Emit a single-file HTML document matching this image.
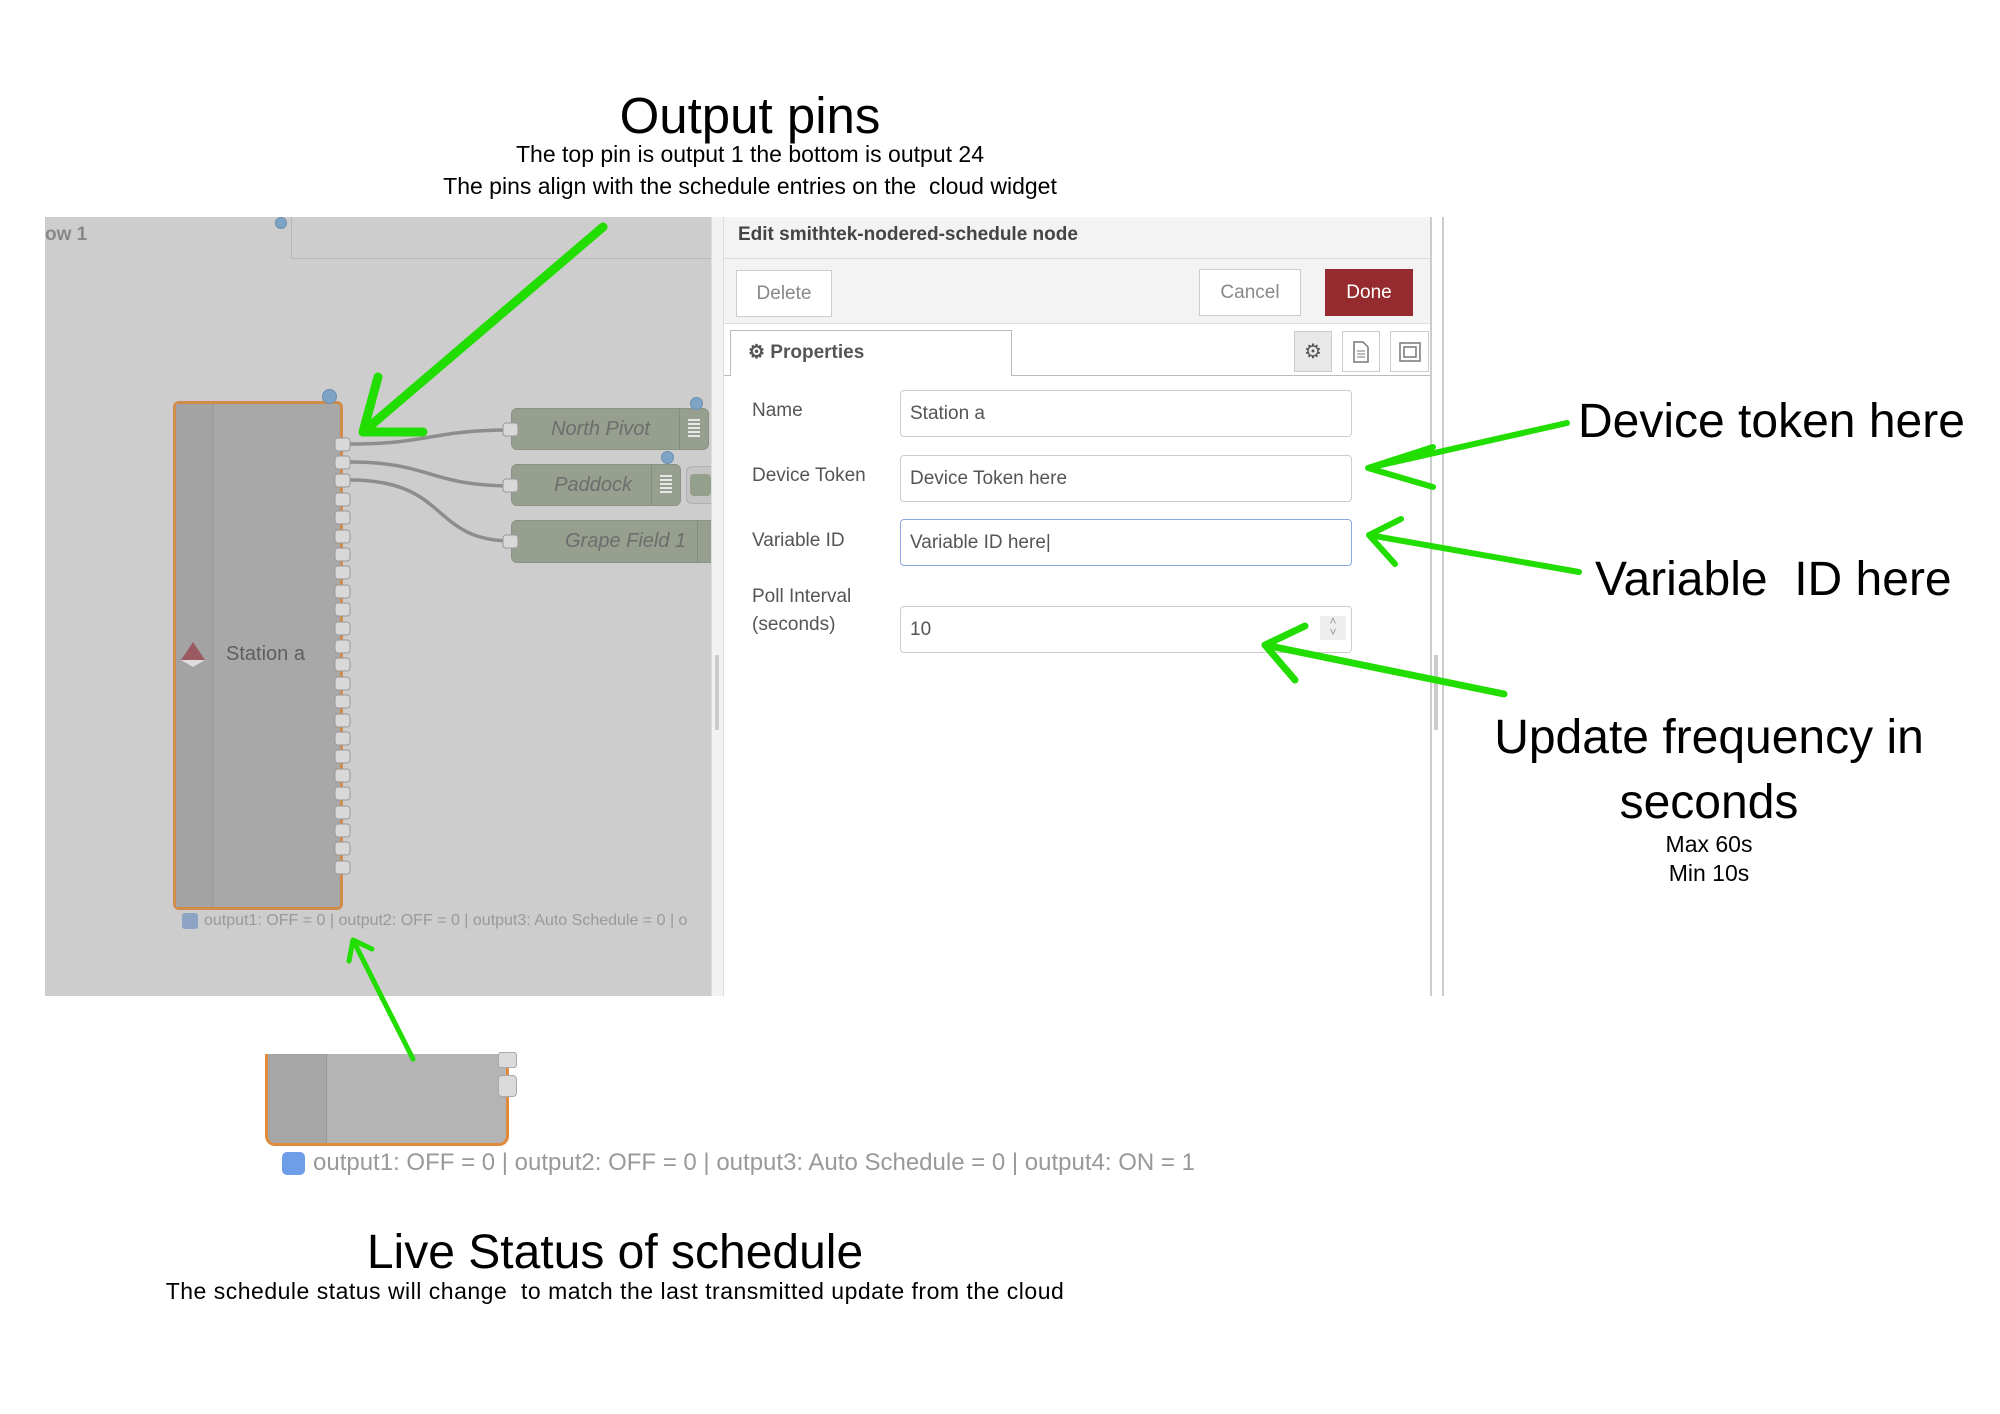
<!DOCTYPE html>
<html><head><meta charset="utf-8">
<style>
*{margin:0;padding:0;box-sizing:border-box}
body{width:2000px;height:1414px;background:#fff;position:relative;overflow:hidden;font-family:"Liberation Sans",sans-serif}
.a{position:absolute}
.ann{position:absolute;color:#000;font-family:"Liberation Sans",sans-serif;white-space:nowrap}
.c{transform:translateX(-50%);text-align:center}
.nd{position:absolute;background:#97a08e;border:1px solid #8a9282;border-radius:6px;color:#6d6d6d;font-style:italic;font-size:20px}
.lbl{position:absolute;left:752px;font-size:19px;color:#555}
.inp{position:absolute;left:900px;width:452px;height:47px;border:1px solid #ccc;border-radius:4px;background:#fff;font-size:19px;color:#555;padding:12px 0 0 9px}
.btn{position:absolute;border:1px solid #ccc;background:#fff;color:#888;font-size:19px;text-align:center}
</style></head><body>

<div class="ann c" style="left:750px;top:86px;font-size:51px">Output pins</div>
<div class="ann c" style="left:750px;top:141px;font-size:23px">The top pin is output 1 the bottom is output 24</div>
<div class="ann c" style="left:750px;top:173px;font-size:23px">The pins align with the schedule entries on the&nbsp; cloud widget</div>

<div class="a" style="left:45px;top:217px;width:666px;height:779px;background:#cdcdcd"></div>
<div class="a" style="left:291px;top:217px;width:420px;height:42px;border-left:1px solid #b8b8b8;border-bottom:1px solid #b8b8b8"></div>
<div class="a" style="left:45px;top:224px;font-size:19px;font-weight:bold;color:#888">ow 1</div>
<div class="a" style="left:275px;top:217px;width:12px;height:12px;border-radius:50%;background:#7fa3c4;border:1px solid #6a8fb0"></div>

<div class="a" style="left:173px;top:401px;width:170px;height:509px;background:#a8a8a8;border:3px solid #d18c4c;border-radius:6px"></div>
<div class="a" style="left:176px;top:404px;width:38px;height:503px;background:#a3a3a3;border-right:1px solid #999"></div>
<svg class="a" style="left:178px;top:640px" width="30" height="30"><polygon points="15,2 27,20 3,20" fill="#9b5a62"/><polygon points="3,20 27,20 15,27" fill="#ddd"/></svg>
<div class="a" style="left:226px;top:643px;font-size:20px;color:#5e5e5e">Station a</div>
<div class="a" style="left:322px;top:389px;width:15px;height:15px;border-radius:50%;background:#7fa3c4;border:1px solid #6a8fb0"></div>

<svg class="a" style="left:0;top:0" width="2000" height="1414">
<path d="M350 444 C430 444,430 430,512 430" stroke="#8d8d8d" stroke-width="3.5" fill="none"/>
<path d="M350 462 C430 462,430 486,512 486" stroke="#8d8d8d" stroke-width="3.5" fill="none"/>
<path d="M350 480 C450 480,430 541,512 541" stroke="#8d8d8d" stroke-width="3.5" fill="none"/>
</svg>

<div class="nd" style="left:511px;top:408px;width:198px;height:42px"><span style="position:absolute;right:58px;top:9px">North Pivot</span><div style="position:absolute;right:28px;top:0;width:1px;height:40px;background:#868d7f"></div><div style="position:absolute;right:8px;top:10px;width:12px;height:20px;background:repeating-linear-gradient(#e8e8e8 0 2px,transparent 2px 4px)"></div></div>
<div class="nd" style="left:511px;top:464px;width:170px;height:42px"><span style="position:absolute;right:48px;top:9px">Paddock</span><div style="position:absolute;right:28px;top:0;width:1px;height:40px;background:#868d7f"></div><div style="position:absolute;right:8px;top:10px;width:12px;height:20px;background:repeating-linear-gradient(#e8e8e8 0 2px,transparent 2px 4px)"></div></div>
<div class="a" style="left:686px;top:466px;width:25px;height:38px;border:1px solid #b0b0b0;border-right:none;border-radius:6px 0 0 6px;background:#c4c4c4"><div style="margin:7px 0 0 3px;width:21px;height:22px;border-radius:4px;background:#95a08c"></div></div>
<div class="nd" style="left:511px;top:520px;width:210px;height:43px"><span style="position:absolute;left:53px;top:9px">Grape Field 1</span><div style="position:absolute;left:185px;top:0;width:1px;height:41px;background:#868d7f"></div></div>
<div class="a" style="left:690px;top:397px;width:13px;height:13px;border-radius:50%;background:#7fa3c4;border:1px solid #6a8fb0"></div>
<div class="a" style="left:661px;top:451px;width:13px;height:13px;border-radius:50%;background:#7fa3c4;border:1px solid #6a8fb0"></div>

<div class="a" style="left:182px;top:913px;width:16px;height:16px;border-radius:3px;background:#8ea4c4"></div>
<div class="a" style="left:204px;top:912px;width:506px;font-size:16px;color:#999;white-space:nowrap;overflow:hidden">output1: OFF = 0 | output2: OFF = 0 | output3: Auto Schedule = 0 | o</div>

<div class="a" style="left:711px;top:217px;width:13px;height:779px;background:#f2f2f2;border-left:1px solid #ddd;border-right:1px solid #ddd"></div>
<div class="a" style="left:715px;top:655px;width:4px;height:75px;background:#ccc"></div>

<div class="a" style="left:724px;top:217px;width:708px;height:779px;background:#fff;border-right:2px solid #ccc"></div>
<div class="a" style="left:724px;top:217px;width:706px;height:42px;background:#f3f3f3;border-bottom:1px solid #ddd"></div>
<div class="a" style="left:738px;top:224px;font-size:19px;font-weight:bold;color:#444">Edit smithtek-nodered-schedule node</div>
<div class="a" style="left:724px;top:259px;width:706px;height:65px;background:#f3f3f3;border-bottom:1px solid #ddd"></div>
<div class="btn" style="left:736px;top:270px;width:96px;height:47px;padding-top:12px">Delete</div>
<div class="btn" style="left:1199px;top:269px;width:102px;height:47px;padding-top:12px">Cancel</div>
<div class="btn" style="left:1325px;top:269px;width:88px;height:47px;padding-top:12px;background:#962b2f;border-color:#962b2f;color:#fff">Done</div>
<div class="a" style="left:724px;top:375px;width:706px;height:1px;background:#bbb"></div>
<div class="a" style="left:730px;top:330px;width:282px;height:46px;background:#fff;border:1px solid #bbb;border-bottom:none"></div>
<div class="a" style="left:748px;top:341px;font-size:19px;font-weight:bold;color:#555">⚙ Properties</div>
<div class="btn" style="left:1294px;top:331px;width:38px;height:41px;background:#e8e8e8;color:#555;font-size:20px;padding-top:7px">⚙</div>
<div class="btn" style="left:1342px;top:331px;width:38px;height:41px;padding-top:9px"><svg width="18" height="22"><path d="M2 1h9l5 5v15H2z" fill="none" stroke="#777" stroke-width="1.5"/><path d="M5 10h8M5 13h8M5 16h8" stroke="#777"/></svg></div>
<div class="btn" style="left:1390px;top:331px;width:39px;height:41px;padding-top:9px"><svg width="24" height="22"><rect x="2" y="2" width="20" height="18" fill="none" stroke="#777" stroke-width="1.5"/><rect x="6" y="6" width="12" height="10" fill="none" stroke="#777" stroke-width="1.5"/></svg></div>

<div class="lbl" style="top:400px">Name</div>
<div class="lbl" style="top:465px">Device Token</div>
<div class="lbl" style="top:530px">Variable ID</div>
<div class="lbl" style="top:586px">Poll Interval</div>
<div class="lbl" style="top:614px">(seconds)</div>
<div class="inp" style="top:390px">Station a</div>
<div class="inp" style="top:455px">Device Token here</div>
<div class="inp" style="top:519px;border-color:#89a9e0">Variable ID here|</div>
<div class="inp" style="top:606px">10</div>
<div class="a" style="left:1320px;top:616px;width:26px;height:24px;background:#eee;color:#999;font-size:12px;text-align:center;line-height:11px">˄<br>˅</div>
<div class="a" style="left:1442px;top:217px;width:2px;height:779px;background:#ccc"></div>
<div class="a" style="left:1434px;top:655px;width:4px;height:75px;background:#ccc"></div>

<div class="ann" style="left:1578px;top:394px;font-size:48px">Device token here</div>
<div class="ann" style="left:1595px;top:552px;font-size:48px">Variable&nbsp; ID here</div>
<div class="ann c" style="left:1709px;top:710px;font-size:48px">Update frequency in</div>
<div class="ann c" style="left:1709px;top:775px;font-size:48px">seconds</div>
<div class="ann c" style="left:1709px;top:831px;font-size:23px">Max 60s</div>
<div class="ann c" style="left:1709px;top:860px;font-size:23px">Min 10s</div>

<div class="a" style="left:265px;top:1054px;width:244px;height:92px;background:#b4b4b4;border:3px solid #e08a3c;border-top:none;border-radius:0 0 10px 10px"></div>
<div class="a" style="left:268px;top:1054px;width:59px;height:89px;background:#a6a6a6;border-right:1px solid #999;border-radius:0 0 0 8px"></div>
<div class="a" style="left:498px;top:1052px;width:19px;height:16px;background:#dadada;border:1px solid #aaa;border-radius:3px"></div>
<div class="a" style="left:498px;top:1075px;width:19px;height:22px;background:#dadada;border:1px solid #aaa;border-radius:4px"></div>
<div class="a" style="left:282px;top:1152px;width:23px;height:23px;border-radius:5px;background:#6f9ee8"></div>
<div class="a" style="left:313px;top:1149px;font-size:24px;color:#999;white-space:nowrap">output1: OFF = 0 | output2: OFF = 0 | output3: Auto Schedule = 0 | output4: ON = 1</div>

<div class="ann c" style="left:615px;top:1225px;font-size:48px">Live Status of schedule</div>
<div class="ann c" style="left:615px;top:1278px;font-size:23px;letter-spacing:0.5px">The schedule status will change&nbsp; to match the last transmitted update from the cloud</div>

<svg class="a" style="left:0;top:0" width="2000" height="1414">
<g fill="#d8d8d8" stroke="#999" stroke-width="1">
<rect x="335" y="438" width="15" height="13" rx="3"/><rect x="335" y="456" width="15" height="13" rx="3"/><rect x="335" y="474" width="15" height="13" rx="3"/><rect x="335" y="493" width="15" height="13" rx="3"/><rect x="335" y="511" width="15" height="13" rx="3"/><rect x="335" y="530" width="15" height="13" rx="3"/><rect x="335" y="548" width="15" height="13" rx="3"/><rect x="335" y="566" width="15" height="13" rx="3"/><rect x="335" y="585" width="15" height="13" rx="3"/><rect x="335" y="603" width="15" height="13" rx="3"/><rect x="335" y="622" width="15" height="13" rx="3"/><rect x="335" y="640" width="15" height="13" rx="3"/><rect x="335" y="658" width="15" height="13" rx="3"/><rect x="335" y="677" width="15" height="13" rx="3"/><rect x="335" y="695" width="15" height="13" rx="3"/><rect x="335" y="714" width="15" height="13" rx="3"/><rect x="335" y="732" width="15" height="13" rx="3"/><rect x="335" y="750" width="15" height="13" rx="3"/><rect x="335" y="769" width="15" height="13" rx="3"/><rect x="335" y="787" width="15" height="13" rx="3"/><rect x="335" y="806" width="15" height="13" rx="3"/><rect x="335" y="824" width="15" height="13" rx="3"/><rect x="335" y="842" width="15" height="13" rx="3"/><rect x="335" y="861" width="15" height="13" rx="3"/>
<rect x="503" y="423" width="15" height="13" rx="3"/><rect x="503" y="479" width="15" height="13" rx="3"/><rect x="503" y="535" width="15" height="13" rx="3"/>
</g>
<g stroke="#22dd00" fill="none" stroke-linecap="round" stroke-linejoin="round">
<path d="M603 227 L363 432 M378 377 L363 432 L423 432" stroke-width="9"/>
<path d="M413 1059 L353 940 M349 961 L353 940 L372 949" stroke-width="5"/>
<path d="M1567 423 L1368 468 M1433 447 L1368 468 L1433 487" stroke-width="6"/>
<path d="M1579 572 L1369 535 M1401 519 L1369 535 L1395 564" stroke-width="6"/>
<path d="M1504 694 L1265 645 M1305 626 L1265 645 L1295 680" stroke-width="7"/>
</g>
</svg>
</body></html>
